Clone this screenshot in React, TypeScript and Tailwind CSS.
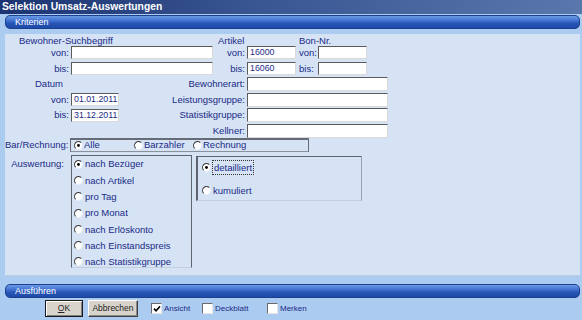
import React from "react";

const NAVY = "text-[#1b2a86]";

function Radio({ checked }: { checked?: boolean }) {
  return (
    <svg width="9" height="9" viewBox="0 0 12 12" className="shrink-0">
      <circle cx="6" cy="6" r="5.2" fill="#ffffff" />
      <path d="M9.7 2.3 A5.2 5.2 0 0 0 2.3 9.7" fill="none" stroke="#3a3a3a" strokeWidth="1.4" />
      <path d="M9.7 2.3 A5.2 5.2 0 0 1 2.3 9.7" fill="none" stroke="#eef2f8" strokeWidth="1" />
      {checked && <circle cx="6" cy="6" r="1.9" fill="#000000" />}
    </svg>
  );
}

function Check({ checked }: { checked?: boolean }) {
  return (
    <div className="w-[11px] h-[11px] shrink-0 bg-white border border-t-[#6a6a6a] border-l-[#6a6a6a] border-b-[#e6e6e6] border-r-[#e6e6e6] flex items-center justify-center">
      {checked && (
        <svg width="8" height="8" viewBox="0 0 8 8">
          <path d="M1 3.6 L3 5.8 L7 1.4" stroke="#000" strokeWidth="1.6" fill="none" />
        </svg>
      )}
    </div>
  );
}

function Field({ className, value }: { className: string; value?: string }) {
  return (
    <div
      className={`${className} shrink-0 bg-white border border-t-[#5b5b5b] border-l-[#5b5b5b] border-b-[#d9d9d9] border-r-[#d9d9d9] pl-[2px] flex items-center text-[8.8px] leading-none text-[#1b2a86] overflow-hidden whitespace-nowrap`}
    >
      {value}
    </div>
  );
}

function Header({ title }: { title: string }) {
  return (
    <div className="h-[14px] rounded-[5px] border border-[#1c3f8f] bg-[linear-gradient(to_bottom,#6b9ae6,#3a6bcc_45%,#2856b6_60%,#1e4aa6)] flex items-center pl-[9px] text-[9px] leading-none text-white">
      {title}
    </div>
  );
}

function Label({ className, children }: { className: string; children: React.ReactNode }) {
  return <div className={`${className} shrink-0 text-[9.5px] leading-none ${NAVY} whitespace-nowrap`}>{children}</div>;
}

export default function App() {
  const auswertung = [
    "nach Bezüger",
    "nach Artikel",
    "pro Tag",
    "pro Monat",
    "nach Erlöskonto",
    "nach Einstandspreis",
    "nach Statistikgruppe",
  ];
  return (
    <div className="w-[582px] h-[320px] overflow-hidden bg-[#accbf0] font-['Liberation_Sans',Arial,sans-serif]">
      {/* title bar */}
      <div className="h-[14px] bg-[linear-gradient(to_right,#1c3472,#3a5693_45%,#5a77ad)] flex items-center pl-[2px] text-[10.3px] font-bold leading-none text-white">
        Selektion Umsatz-Auswertungen
      </div>

      <div className="pl-[5px] pr-[2px] pt-[1px]">
        <Header title="Kriterien" />

        {/* Kriterien panel */}
        <div className="bg-[#d5e3f5] border-b border-[#b9cce4] pb-[7px]">
          {/* header labels */}
          <div className="flex h-[12px] pt-[2px] items-center mt-[5px]">
            <Label className="w-[213px] pl-[14px]">Bewohner-Suchbegriff</Label>
            <Label className="w-[81px]">Artikel</Label>
            <Label className="w-[60px]">Bon-Nr.</Label>
          </div>
          {/* von row */}
          <div className="flex items-center h-[13px]">
            <Label className="w-[66px] text-right pr-[2px]">von:</Label>
            <Field className="w-[142px] h-[13px]" />
            <Label className="w-[34px] text-right pr-[2px]">von:</Label>
            <Field className="w-[49px] h-[13px]" value="16000" />
            <Label className="w-[22px] pl-[3px]">von:</Label>
            <Field className="w-[49px] h-[13px]" />
          </div>
          {/* bis row */}
          <div className="flex items-center h-[13px] mt-[3px]">
            <Label className="w-[66px] text-right pr-[2px]">bis:</Label>
            <Field className="w-[142px] h-[13px]" />
            <Label className="w-[34px] text-right pr-[2px]">bis:</Label>
            <Field className="w-[49px] h-[13px]" value="16060" />
            <Label className="w-[22px] pl-[3px]">bis:</Label>
            <Field className="w-[49px] h-[13px]" />
          </div>

          {/* Datum + right fields */}
          <div className="flex mt-[2px]">
            <div className="w-[120px] flex flex-col gap-[1.5px]">
              <div className="h-[14px] flex items-center">
                <Label className="pl-[30px]">Datum</Label>
              </div>
              <div className="h-[14px] flex items-center">
                <Label className="w-[66px] text-right pr-[2px]">von:</Label>
                <Field className="w-[48px] h-[13px]" value="01.01.2011" />
              </div>
              <div className="h-[14px] flex items-center">
                <Label className="w-[66px] text-right pr-[2px]">bis:</Label>
                <Field className="w-[48px] h-[13px]" value="31.12.2011" />
              </div>
            </div>
            <div className="flex flex-col gap-[1.5px]">
              {["Bewohnerart:", "Leistungsgruppe:", "Statistikgruppe:", "Kellner:"].map((l) => (
                <div key={l} className="h-[14px] flex items-center">
                  <Label className="w-[122px] text-right pr-[2px]">{l}</Label>
                  <Field className="w-[141px] h-[14px]" />
                </div>
              ))}
            </div>
          </div>

          {/* Bar/Rechnung */}
          <div className="flex items-center">
            <Label className="w-[62px] text-right">Bar/Rechnung:</Label>
            <div className="ml-[3px] w-[239px] h-[14px] border border-[#666b76] border-t-2 border-b-[#8a909c] flex items-center pl-[3px]">
              <div className="w-[60px] flex items-center gap-[1px]">
                <Radio checked />
                <Label className="">Alle</Label>
              </div>
              <div className="w-[59px] flex items-center gap-[1px]">
                <Radio />
                <Label className="">Barzahler</Label>
              </div>
              <div className="flex items-center gap-[1px]">
                <Radio />
                <Label className="">Rechnung</Label>
              </div>
            </div>
          </div>

          {/* Auswertung */}
          <div className="flex items-start mt-[3.5px]">
            <div className="w-[62px] h-[16px] mt-[1px] flex items-center justify-end pr-[3px]">
              <Label className="">Auswertung:</Label>
            </div>
            <div className="ml-[4px] w-[121px] h-[113px] border border-[#5f6470] border-b-[#c4d0e0] pl-[2px]">
              {auswertung.map((a, i) => (
                <div key={a} className="h-[16.3px] flex items-center gap-[2px]">
                  <Radio checked={i === 0} />
                  <Label className="">{a}</Label>
                </div>
              ))}
            </div>
            <div className="ml-[4px] mt-[1px] w-[166px] h-[45px] border border-[#5f6470] border-l-2 border-b-[#c4d0e0] border-r-[#9aa3b2] pl-[4px] pt-[3px]">
              <div className="h-[15px] flex items-center gap-[1px]">
                <Radio checked />
                <span className="h-[15px] border border-dotted border-[#333] px-[1px] flex items-center">
                  <Label className="">detailliert</Label>
                </span>
              </div>
              <div className="h-[15px] mt-[8px] flex items-center gap-[2px]">
                <Radio />
                <Label className="">kumuliert</Label>
              </div>
            </div>
          </div>
        </div>

        {/* Ausführen */}
        <div className="mt-[8px]">
          <Header title="Ausführen" />
        </div>
        <div className="flex items-center mt-[2px] h-[17px]">
          <button className="ml-[40px] w-[38px] h-[17px] bg-[#d8d4cc] border border-[#1a1a1a] shadow-[inset_1px_1px_0_#ffffff,inset_-1px_-1px_0_#808080] text-[8.5px] leading-none text-[#222]">
            <span className="underline">O</span>K
          </button>
          <button className="ml-[5px] w-[50px] h-[17px] bg-[#d8d4cc] border border-t-white border-l-white border-b-[#404040] border-r-[#404040] shadow-[inset_-1px_-1px_0_#8a8a8a] text-[8.5px] leading-none text-[#222]">
            Abbrechen
          </button>
          <div className="ml-[13px] w-[51px] flex items-center gap-[2px]">
            <Check checked />
            <span className={`text-[8px] leading-none ${NAVY}`}>Ansicht</span>
          </div>
          <div className="w-[65px] flex items-center gap-[2px]">
            <Check />
            <span className={`text-[8px] leading-none ${NAVY}`}>Deckblatt</span>
          </div>
          <div className="flex items-center gap-[2px]">
            <Check />
            <span className={`text-[8px] leading-none ${NAVY}`}>Merken</span>
          </div>
        </div>
      </div>
    </div>
  );
}
